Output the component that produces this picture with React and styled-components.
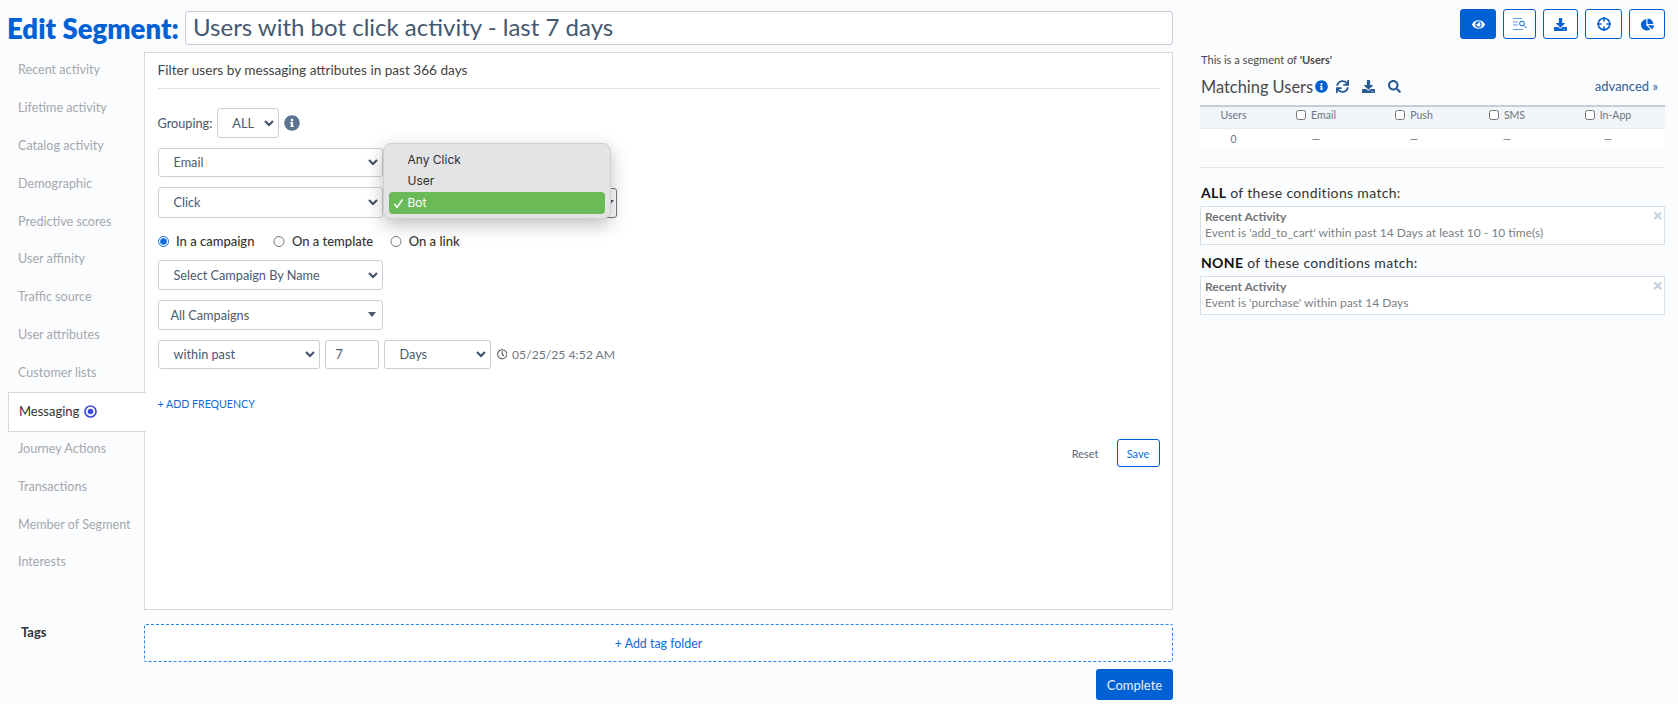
import React from "react";
import styled, { createGlobalStyle } from "styled-components";
import {
  FaInfoCircle,
  FaSync,
  FaDownload,
  FaSearch,
  FaEye,
  FaChartPie,
  FaTimes,
  FaRegClock,
} from "react-icons/fa";

const GlobalStyle = createGlobalStyle`
  html, body {
    margin: 0;
    padding: 0;
    background: #fbfcfe;
    font-family: Lato, "Open Sans", sans-serif;
    color: #4a4a4a;
  }
  * { box-sizing: border-box; }
`;

const Page = styled.div`
  width: 1678px;
  height: 704px;
  overflow: hidden;
  display: flex;
  background: #fbfcfe;
`;

const LeftColumn = styled.div`
  width: 1173px;
  flex: none;
`;

const TitleRow = styled.div`
  height: 52px;
  display: flex;
  padding: 11px 0 7px 7px;
  align-items: stretch;
`;

const Title = styled.h1`
  margin: 0 5px 0 0;
  width: 173px;
  font-size: 27.5px;
  line-height: 36px;
  font-weight: 800;
  color: #0061d5;
  white-space: nowrap;
`;

const NameInput = styled.div`
  flex: 1;
  background: #fff;
  border: 1px solid #c5ccd6;
  border-radius: 3px;
  padding: 0 7px;
  font-size: 24px;
  line-height: 30px;
  color: #44586f;
`;

const Editor = styled.div`
  display: flex;
  height: 558px;
`;

const Sidebar = styled.nav`
  width: 144px;
  flex: none;
  padding-left: 8px;
`;

const NavItem = styled.div`
  height: ${(p) => (p.$active ? "40px" : "37.8px")};
  margin: ${(p) => (p.$active ? "0 -2px -1.5px 0" : "0")};
  display: flex;
  align-items: center;
  gap: 5px;
  padding: 0 0 2px 10px;
  font-size: ${(p) => (p.$active ? "13px" : "12.6px")};
  color: ${(p) => (p.$active ? "#333" : "#a5a8ad")};
  background: ${(p) => (p.$active ? "#fff" : "transparent")};
  border: ${(p) => (p.$active ? "1px solid #d6d9de" : "none")};
  border-right: none;
  position: relative;
  z-index: ${(p) => (p.$active ? 1 : 0)};
`;

const Panel = styled.section`
  flex: 1;
  position: relative;
  background: #fff;
  border: 1.5px solid #d6d8db;
  padding: 0 12.5px;
`;

const PanelTitle = styled.div`
  height: 36px;
  padding-bottom: 2px;
  display: flex;
  align-items: center;
  font-size: 13.6px;
  color: #444;
  border-bottom: 1px solid #dcdfe3;
`;

const GroupingRow = styled.div`
  display: flex;
  align-items: center;
  margin-top: 19px;
  font-size: 12.7px;
  color: #4a5666;
  gap: 5px;
`;

const InfoIcon = styled(FaInfoCircle)`
  color: #5b7490;
  font-size: 16px;
`;

const SelectBox = styled.div`
  width: ${(p) => p.$width || "225px"};
  height: ${(p) => p.$height || "30px"};
  flex: none;
  display: flex;
  align-items: center;
  justify-content: ${(p) => p.$justify || "space-between"};
  padding: ${(p) => p.$padding || "0 4px 1px 15px"};
  background: #fff;
  border: 1px solid ${(p) => p.$border || "#c8cfd8"};
  border-radius: 3px;
  font-size: 12.7px;
  color: #4a5a6e;
`;

const Row = styled.div`
  display: flex;
  align-items: center;
  gap: ${(p) => p.$gap || "5px"};
  margin-top: ${(p) => p.$top || "10px"};
`;

const RadioLabel = styled.label`
  display: flex;
  align-items: center;
  gap: 7px;
  margin-right: ${(p) => p.$gap || "19px"};
  font-size: 13px;
  font-weight: 500;
  color: #333;
`;

const Radio = styled.input`
  width: 11.5px;
  height: 11.5px;
  margin: 1px 0 0;
  accent-color: #0a6cdc;
`;

const NumberBox = styled.div`
  width: 54px;
  height: 29px;
  background: #fff;
  border: 1px solid #c8cfd8;
  border-radius: 3px;
  padding: 0 10px;
  font-size: 12.7px;
  line-height: 26px;
  color: #4a5a6e;
`;

const DateStamp = styled.div`
  display: flex;
  align-items: center;
  gap: 5px;
  margin-left: 1px;
  font-size: 12.2px;
  color: #6f7782;
  svg { color: #555; font-size: 10.5px; }
`;

const AddFrequency = styled.div`
  margin-top: 27px;
  font-size: 10.6px;
  line-height: 16px;
  color: #0a6cdc;
`;

const FormActions = styled.div`
  display: flex;
  justify-content: flex-end;
  align-items: center;
  gap: 18px;
  margin-top: 27px;
`;

const ResetLink = styled.span`
  font-size: 11px;
  color: #5b6673;
`;

const SaveButton = styled.button`
  width: 43px;
  height: 28px;
  padding: 0;
  background: #fff;
  border: 1px solid #0061d5;
  border-radius: 3px;
  font: inherit;
  font-size: 11px;
  color: #0a6cdc;
`;

const ClickMenu = styled.ul`
  position: absolute;
  left: 238px;
  top: 89.5px;
  width: 228px;
  height: 76px;
  margin: 0;
  padding: 5px;
  list-style: none;
  background: #e3e4e6;
  border: 1px solid #cfd0d2;
  border-radius: 8px;
  box-shadow: 0 6px 18px rgba(0, 0, 0, 0.25);
  font-family: Inter, "Liberation Sans", sans-serif;
  font-size: 12px;
  color: #2c2c2e;
  z-index: 2;
`;

const MenuItem = styled.li`
  height: ${(p) => (p.$checked ? "22px" : "21px")};
  margin-top: ${(p) => (p.$checked ? "1px" : "0")};
  display: flex;
  align-items: center;
  padding-left: 18.5px;
  position: relative;
  border-radius: 4px;
  background: ${(p) => (p.$checked ? "#6abb58" : "transparent")};
  color: ${(p) => (p.$checked ? "#fff" : "inherit")};
`;

const CheckMark = styled.svg`
  position: absolute;
  left: 4px;
  top: 6px;
  width: 11px;
  height: 11px;
`;

const TagRow = styled.div`
  display: flex;
  margin-top: 14px;
`;

const TagLabel = styled.div`
  width: 144px;
  flex: none;
  padding: 0 0 0 21px;
  font-size: 13px;
  line-height: 17px;
  font-weight: 700;
  color: #333;
`;

const TagBox = styled.div`
  flex: 1;
  height: 38px;
  display: flex;
  align-items: center;
  justify-content: center;
  background: #fff;
  border: 1px dashed #2b85f0;
  border-radius: 2px;
  font-size: 12.4px;
  color: #0a6cdc;
`;

const Footer = styled.div`
  display: flex;
  justify-content: flex-end;
  margin-top: 7px;
`;

const CompleteButton = styled.button`
  width: 77px;
  height: 31px;
  padding: 0;
  background: #0061d5;
  border: none;
  border-radius: 3px;
  font: inherit;
  font-size: 13px;
  color: #e8f1fc;
`;

const RightColumn = styled.aside`
  width: 465px;
  margin-left: 27px;
  flex: none;
  padding-top: 9px;
`;

const Toolbar = styled.div`
  display: flex;
  justify-content: flex-end;
  gap: 7px;
`;

const ToolButton = styled.button`
  width: ${(p) => p.$width || "36px"};
  height: 30px;
  padding: 0;
  display: flex;
  align-items: center;
  justify-content: center;
  border: 1px solid #0061d5;
  border-radius: 3px;
  background: ${(p) => (p.$filled ? "#0061d5" : "#fff")};
  color: ${(p) => (p.$filled ? "#fff" : "#0061d5")};
  font-size: 13px;
`;

const SegmentOf = styled.div`
  margin: 14px 0 0 1px;
  font-size: 11.1px;
  line-height: 14px;
  color: #4a4a4a;
`;

const MatchingRow = styled.div`
  display: flex;
  align-items: center;
  height: 22px;
  margin: 8px 7px 0 1px;
  color: #2a5a94;
`;

const MatchingTitle = styled.span`
  font-size: 16.4px;
  color: #4a4a4a;
  margin-right: 2px;
`;

const MatchingIcon = styled.span`
  display: flex;
  font-size: 13px;
  margin-right: ${(p) => p.$gap || "12px"};
  color: ${(p) => p.$color || "#2a5a94"};
`;

const AdvancedLink = styled.span`
  margin-left: auto;
  font-size: 13px;
  color: #2f6099;
`;

const StatsGrid = styled.div`
  display: grid;
  grid-template-columns: 67px 98px 98px 88px 114px;
  margin-top: 8px;
  border-top: 2px solid #c6ccd8;
  font-size: 10.5px;
  color: #6c7480;
`;

const HeadCell = styled.div`
  height: 22px;
  padding-bottom: 5px;
  display: flex;
  align-items: center;
  justify-content: center;
  gap: 5px;
  background: #f2f5fa;
  border-bottom: 1px solid #e8ebf0;
`;

const ValueCell = styled.div`
  height: 19px;
  display: flex;
  align-items: center;
  justify-content: center;
  background: #fff;
`;

const SmallCheck = styled.input`
  width: 10px;
  height: 10px;
  margin: 0;
`;

const Divider = styled.div`
  height: 1px;
  margin-top: 19px;
  background: #e6e8eb;
`;

const ConditionHeading = styled.div`
  margin: ${(p) => p.$top || "16px"} 0 4px 1px;
  font-size: 14px;
  letter-spacing: 0.33px;
  line-height: 18px;
  color: #333;
  b { color: #111; font-weight: 700; }
`;

const ConditionCard = styled.div`
  position: relative;
  height: 39px;
  padding: 2px 4px 0;
  background: #fff;
  border: 1px solid #d5e0ea;
  font-size: 12px;
  line-height: 16px;
  color: #7b7f85;
`;

const ConditionName = styled.div`
  font-weight: 700;
  color: #707479;
`;

const RemoveIcon = styled(FaTimes)`
  position: absolute;
  right: 1px;
  top: 2.5px;
  font-size: 11.5px;
  color: #c5d2de;
`;

const sideItems = [
  "Recent activity",
  "Lifetime activity",
  "Catalog activity",
  "Demographic",
  "Predictive scores",
  "User affinity",
  "Traffic source",
  "User attributes",
  "Customer lists",
  "Messaging",
  "Journey Actions",
  "Transactions",
  "Member of Segment",
  "Interests",
];

const statColumns = ["Email", "Push", "SMS", "In-App"];

const Chevron = ({ size = 10 }) => (
  <svg width={size} height={size} viewBox="0 0 10 10" fill="none">
    <path d="M1 3l4 4 4-4" stroke="#3e5068" strokeWidth="2" />
  </svg>
);

const Caret = () => (
  <svg width="8" height="5" viewBox="0 0 8 5">
    <path d="M0 0h8L4 5z" fill="#4a5a6e" />
  </svg>
);

const ActiveDot = () => (
  <svg width="13" height="13" viewBox="0 0 13 13" fill="none">
    <circle cx="6.5" cy="6.5" r="5.5" stroke="#3d4de0" strokeWidth="1.7" />
    <circle cx="6.5" cy="6.5" r="2.8" fill="#3d4de0" />
  </svg>
);

const ListSearchIcon = () => (
  <svg width="16" height="14" viewBox="0 0 16 14" fill="none" stroke="#5f9ae6">
    <path d="M1 1.5h9M1 5h5M1 8h5M1 12.5h10" />
    <circle cx="10" cy="6.5" r="2.4" stroke="#0061d5" />
    <path d="M12 8.5l2.5 2.5" stroke="#0061d5" />
  </svg>
);

const TargetIcon = () => (
  <svg width="14" height="14" viewBox="0 0 14 14" fill="none" stroke="#0061d5" strokeWidth="1.6">
    <circle cx="7" cy="7" r="5.8" />
    <path d="M7 0v4.5M7 9.5V14M0 7h4.5M9.5 7H14" />
  </svg>
);

const DownloadGlyph = styled(FaDownload)`
  font-size: 13px;
`;

export default function App() {
  return (
    <Page>
      <GlobalStyle />
      <LeftColumn>
        <TitleRow>
          <Title>Edit Segment:</Title>
          <NameInput>Users with bot click activity - last 7 days</NameInput>
        </TitleRow>
        <Editor>
          <Sidebar>
            {sideItems.map((item) => (
              <NavItem key={item} $active={item === "Messaging"}>
                {item}
                {item === "Messaging" && <ActiveDot />}
              </NavItem>
            ))}
          </Sidebar>
          <Panel>
            <PanelTitle>Filter users by messaging attributes in past 366 days</PanelTitle>
            <GroupingRow>
              Grouping:
              <SelectBox $width="62px" $padding="0 4px 0 14px">
                ALL <Chevron />
              </SelectBox>
              <InfoIcon />
            </GroupingRow>
            <Row $top="10px">
              <SelectBox $height="29px">
                Email <Chevron />
              </SelectBox>
            </Row>
            <Row $top="10px">
              <SelectBox $height="31px">
                Click <Chevron />
              </SelectBox>
              <SelectBox $width="229px" $border="#777" $padding="0 2px 0 0" $justify="flex-end">
                <Caret />
              </SelectBox>
            </Row>
            <Row $top="15px" $gap="0">
              <RadioLabel>
                <Radio type="radio" name="scope" defaultChecked /> In a campaign
              </RadioLabel>
              <RadioLabel $gap="17px">
                <Radio type="radio" name="scope" /> On a template
              </RadioLabel>
              <RadioLabel>
                <Radio type="radio" name="scope" /> On a link
              </RadioLabel>
            </Row>
            <Row $top="11px">
              <SelectBox>
                Select Campaign By Name <Chevron />
              </SelectBox>
            </Row>
            <Row>
              <SelectBox $padding="0 6px 1px 12px">
                All Campaigns <Caret />
              </SelectBox>
            </Row>
            <Row>
              <SelectBox $width="162px" $height="29px">
                within past <Chevron />
              </SelectBox>
              <NumberBox>7</NumberBox>
              <SelectBox $width="107px" $height="29px">
                Days <Chevron />
              </SelectBox>
              <DateStamp>
                <FaRegClock /> 05/25/25 4:52 AM
              </DateStamp>
            </Row>
            <AddFrequency>+ ADD FREQUENCY</AddFrequency>
            <FormActions>
              <ResetLink>Reset</ResetLink>
              <SaveButton>Save</SaveButton>
            </FormActions>
            <ClickMenu>
              <MenuItem>Any Click</MenuItem>
              <MenuItem>User</MenuItem>
              <MenuItem $checked>
                <CheckMark viewBox="0 0 11 11" fill="none">
                  <path d="M1.5 6l2.5 3.5L9.5 1.5" stroke="#fff" strokeWidth="1.5" />
                </CheckMark>
                Bot
              </MenuItem>
            </ClickMenu>
          </Panel>
        </Editor>
        <TagRow>
          <TagLabel>Tags</TagLabel>
          <TagBox>+ Add tag folder</TagBox>
        </TagRow>
        <Footer>
          <CompleteButton>Complete</CompleteButton>
        </Footer>
      </LeftColumn>

      <RightColumn>
        <Toolbar>
          <ToolButton $filled><FaEye /></ToolButton>
          <ToolButton $width="33px"><ListSearchIcon /></ToolButton>
          <ToolButton $width="35px"><DownloadGlyph /></ToolButton>
          <ToolButton $width="37px"><TargetIcon /></ToolButton>
          <ToolButton><FaChartPie /></ToolButton>
        </Toolbar>
        <SegmentOf>
          This is a segment of <b>'Users'</b>
        </SegmentOf>
        <MatchingRow>
          <MatchingTitle>Matching Users</MatchingTitle>
          <MatchingIcon $color="#0061d5" $gap="8px"><FaInfoCircle /></MatchingIcon>
          <MatchingIcon $gap="13px"><FaSync /></MatchingIcon>
          <MatchingIcon $gap="13px"><DownloadGlyph /></MatchingIcon>
          <MatchingIcon><FaSearch /></MatchingIcon>
          <AdvancedLink>advanced »</AdvancedLink>
        </MatchingRow>
        <StatsGrid>
          <HeadCell>Users</HeadCell>
          {statColumns.map((name) => (
            <HeadCell key={name}>
              <SmallCheck type="checkbox" /> {name}
            </HeadCell>
          ))}
          <ValueCell>0</ValueCell>
          {statColumns.map((name) => (
            <ValueCell key={name}>—</ValueCell>
          ))}
        </StatsGrid>
        <Divider />
        <ConditionHeading>
          <b>ALL</b> of these conditions match:
        </ConditionHeading>
        <ConditionCard>
          <ConditionName>Recent Activity</ConditionName>
          Event is 'add_to_cart' within past 14 Days at least 10 - 10 time(s)
          <RemoveIcon />
        </ConditionCard>
        <ConditionHeading $top="9px">
          <b>NONE</b> of these conditions match:
        </ConditionHeading>
        <ConditionCard>
          <ConditionName>Recent Activity</ConditionName>
          Event is 'purchase' within past 14 Days
          <RemoveIcon />
        </ConditionCard>
      </RightColumn>
    </Page>
  );
}
